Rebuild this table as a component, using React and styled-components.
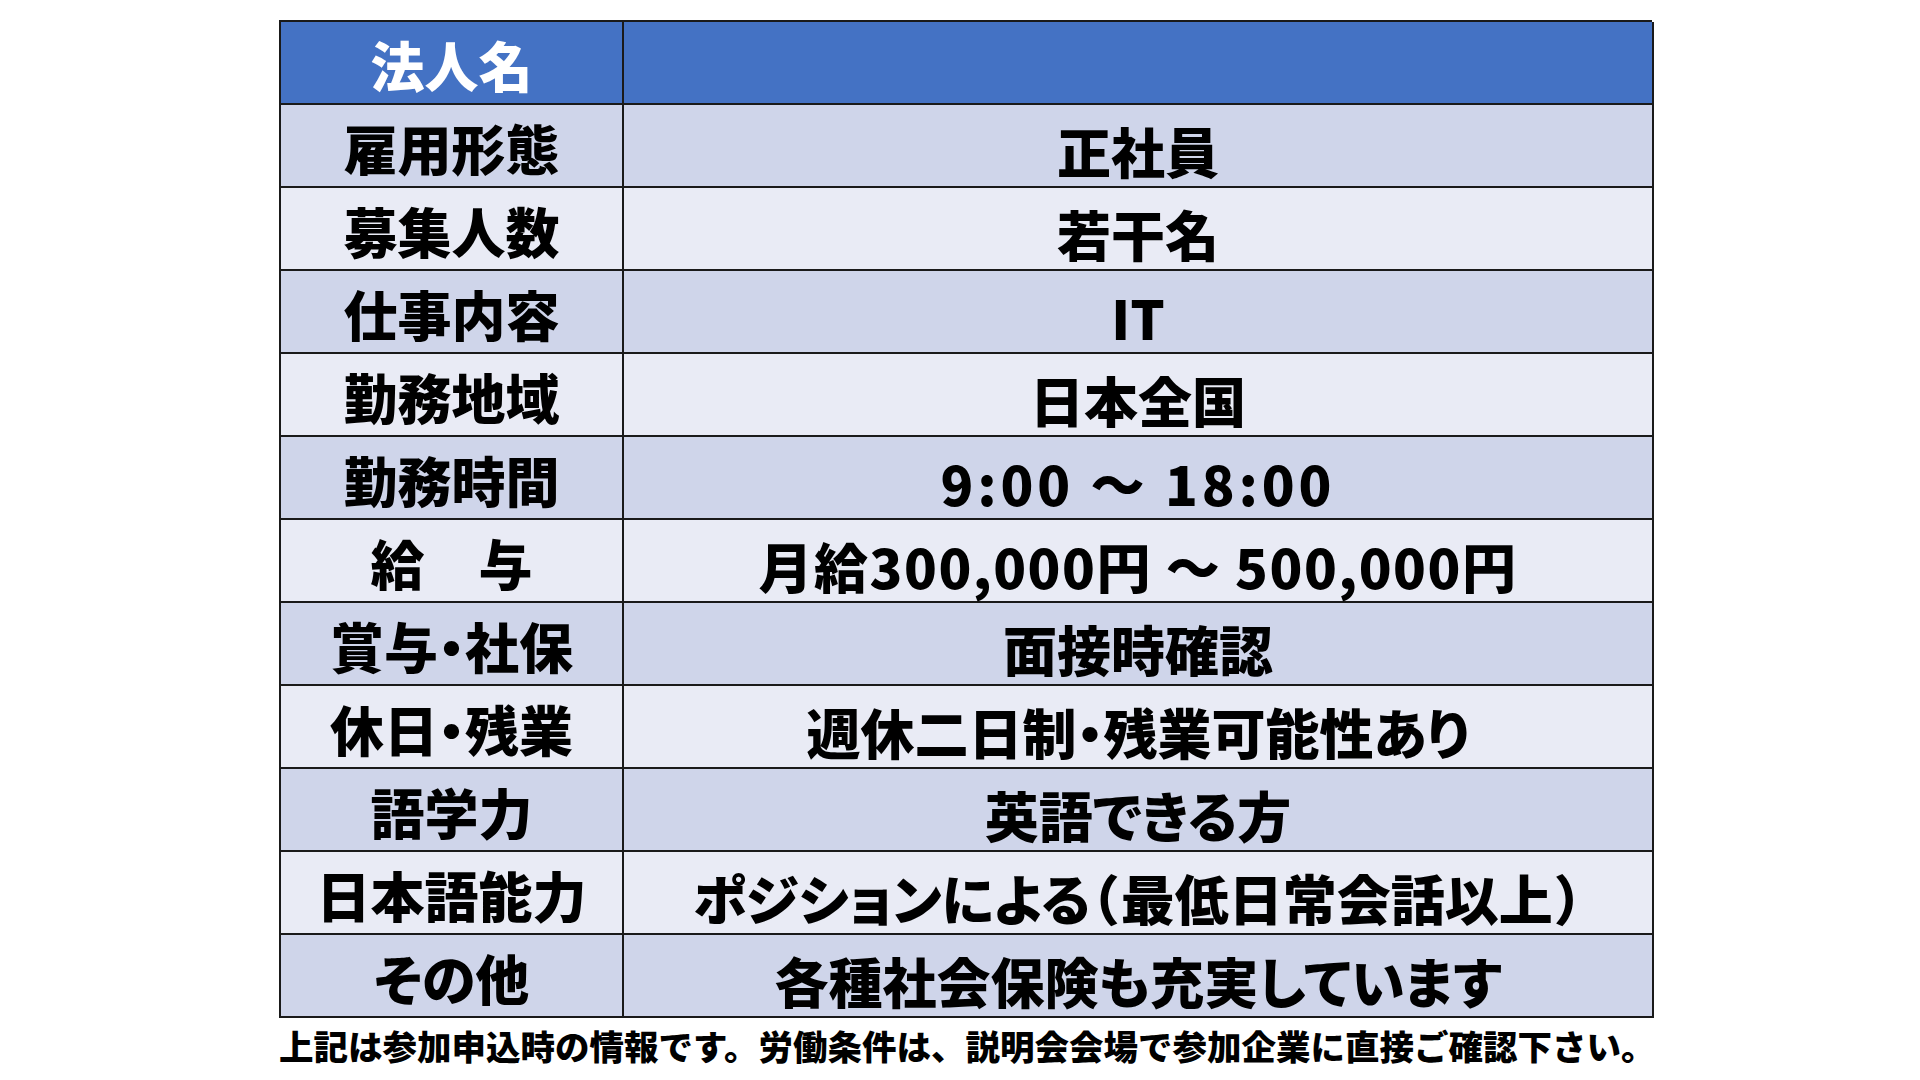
import styled, { createGlobalStyle } from "styled-components"

const GlobalStyle = createGlobalStyle`
  html, body {
    margin: 0;
    padding: 0;
    background: #fff;
  }
  body {
    font-family: "Noto Sans CJK JP", "Noto Sans", sans-serif;
  }
`

const Page = styled.div`
  width: 1920px;
  height: 1080px;
  padding: 20px 0 0 279px;
  box-sizing: border-box;
  overflow: hidden;
`

const Table = styled.div`
  display: grid;
  grid-template-columns: 343px 1030px;
  grid-auto-rows: 83px;
  width: 1373px;
  border-top: 2px solid #1a1a1a;
  border-left: 2px solid #1a1a1a;
  box-sizing: border-box;
`

const Cell = styled.div`
  display: flex;
  align-items: center;
  justify-content: center;
  border-right: 2px solid #1a1a1a;
  border-bottom: 2px solid #1a1a1a;
  background: ${(p) => (p.$head ? "#4472c4" : p.$odd ? "#cfd5ea" : "#e9ebf5")};
  color: ${(p) => (p.$head ? "#fff" : "#000")};
  font-size: 54px;
  font-weight: 900;
  line-height: 1;
  white-space: nowrap;
  font-feature-settings: "palt";
  letter-spacing: ${(p) => p.$spacing || 0}px;
  padding-top: ${(p) => (p.$value ? "10px" : "4px")};
  box-sizing: border-box;
`

const Note = styled.p`
  margin: 7px 0 0;
  font-size: 34.5px;
  font-weight: 900;
  line-height: 1.2;
  color: #000;
  white-space: nowrap;
`

const rows = [
  ["雇用形態", "正社員"],
  ["募集人数", "若干名"],
  ["仕事内容", "IT"],
  ["勤務地域", "日本全国"],
  ["勤務時間", "9:00 ～ 18:00", 4],
  ["給　与", "月給300,000円 ～ 500,000円", 1.5],
  ["賞与・社保", "面接時確認"],
  ["休日・残業", "週休二日制・残業可能性あり"],
  ["語学力", "英語できる方"],
  ["日本語能力", "ポジションによる（\u200a最低日常会話以上\u200a）"],
  ["その他", "各種社会保険も充実しています"],
]

export default function App() {
  return (
    <>
      <GlobalStyle />
      <Page>
        <Table>
          <Cell $head>法人名</Cell>
          <Cell $head />
          {rows.map(([label, value, spacing], i) => [
            <Cell key={label} $odd={i % 2 === 0}>
              {label}
            </Cell>,
            <Cell key={label + "v"} $odd={i % 2 === 0} $value $spacing={spacing}>
              {value}
            </Cell>,
          ])}
        </Table>
        <Note>上記は参加申込時の情報です。労働条件は、説明会会場で参加企業に直接ご確認下さい。</Note>
      </Page>
    </>
  )
}
